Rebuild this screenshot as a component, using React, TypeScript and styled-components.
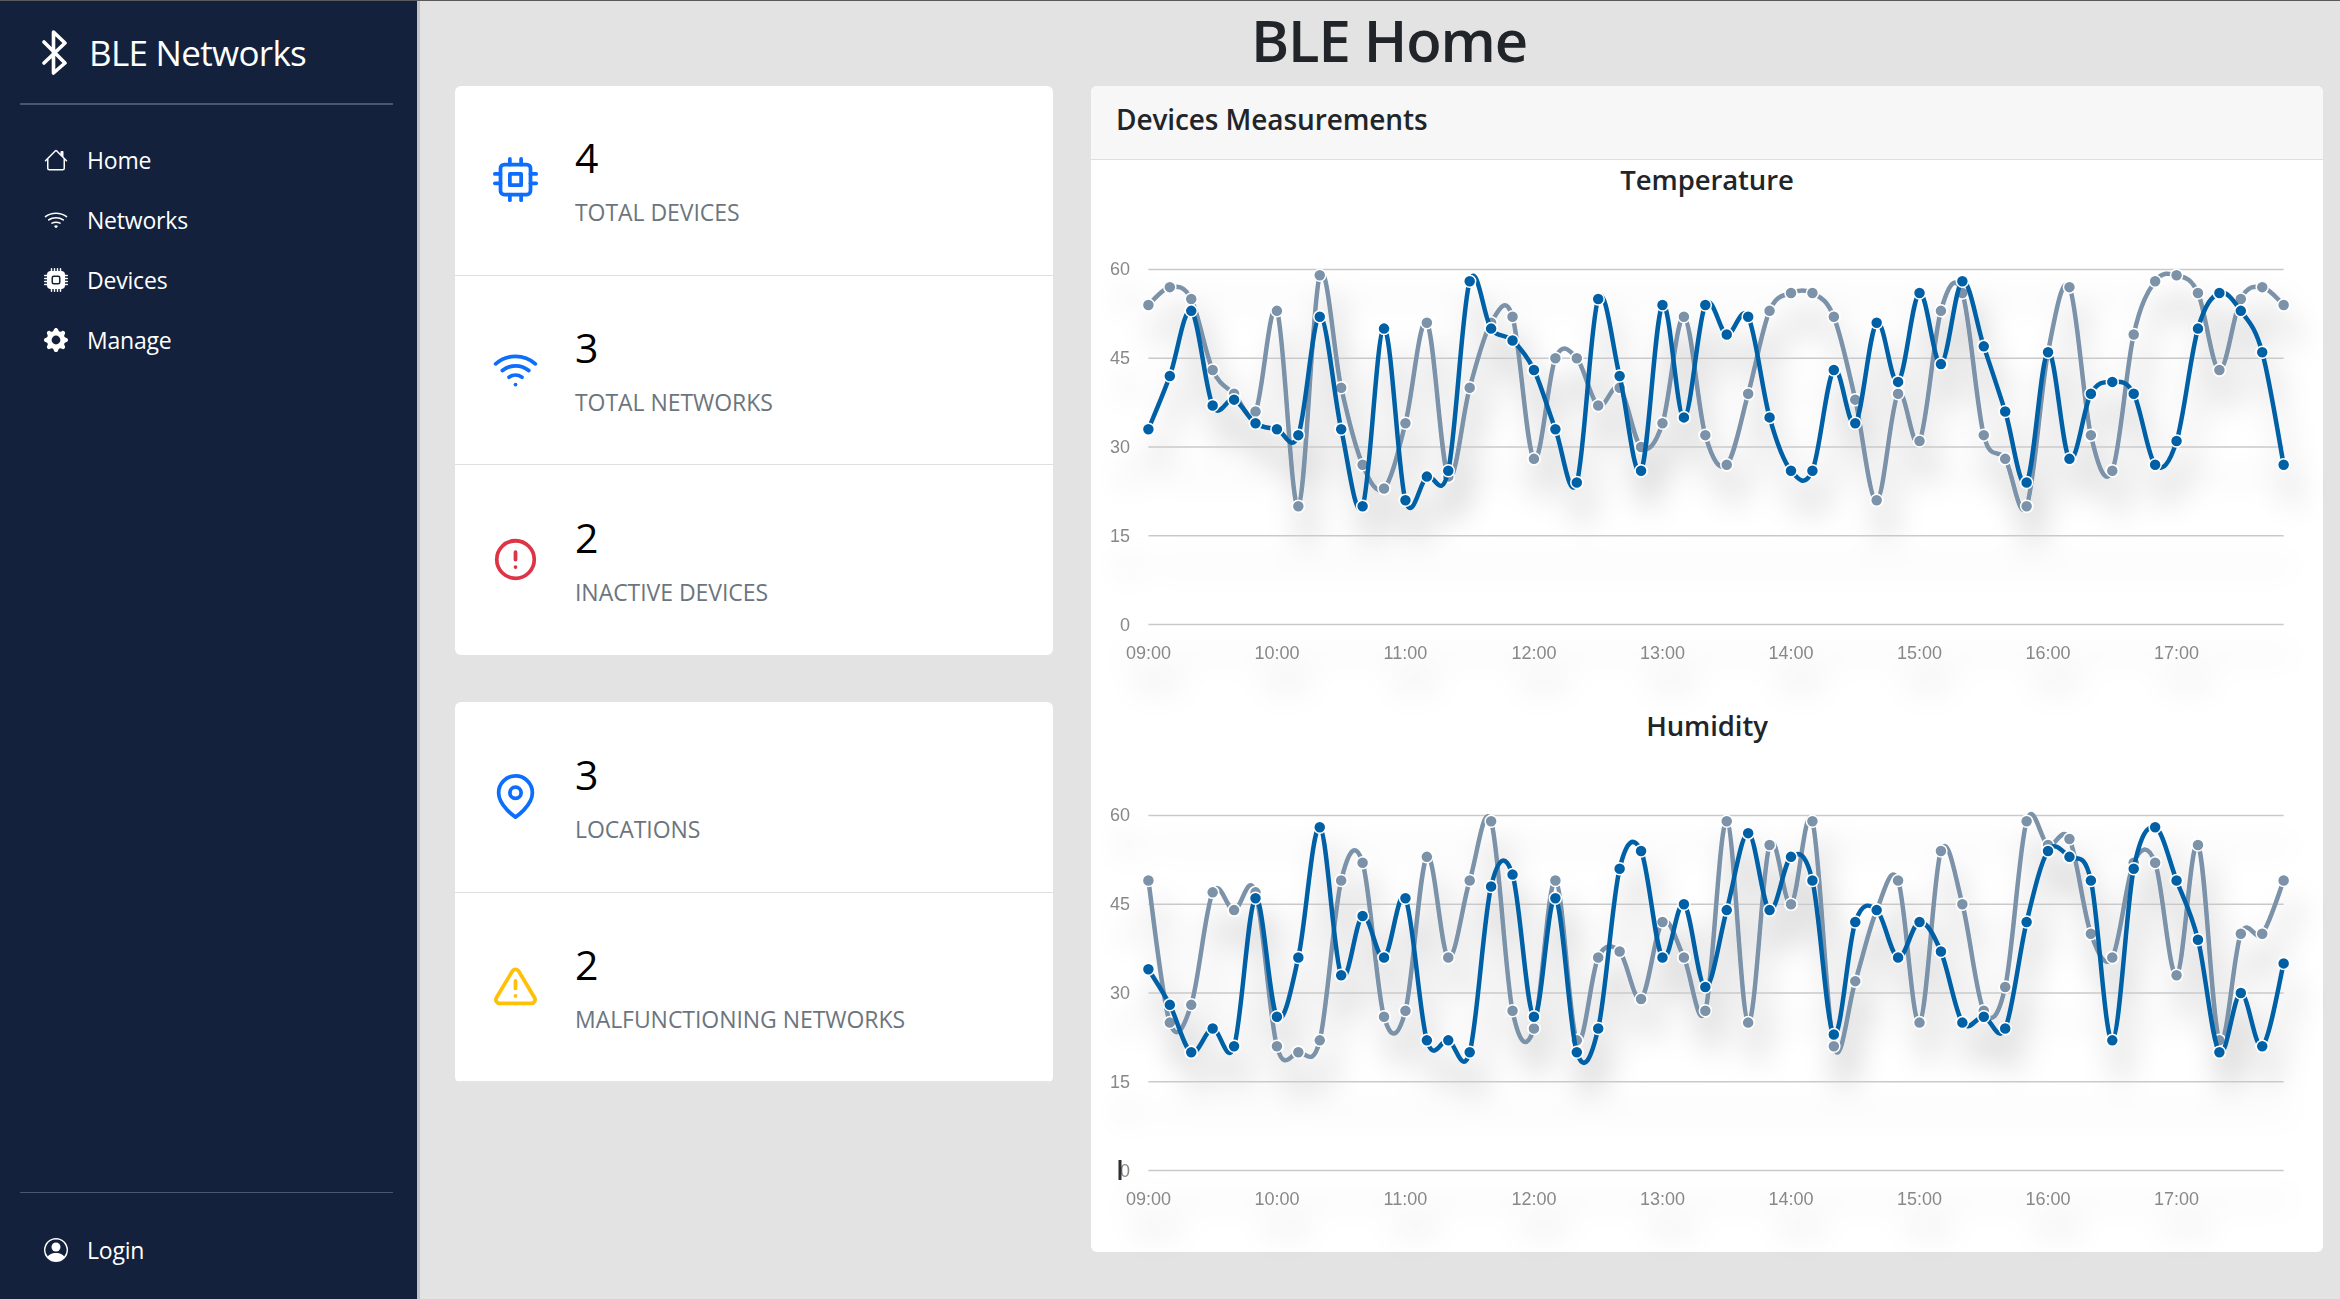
import React from "react";
import styled, { createGlobalStyle } from "styled-components";
import { BsHouse, BsWifi, BsCpuFill, BsGearFill, BsPersonCircle } from "react-icons/bs";
import { FiCpu, FiWifi, FiAlertCircle, FiMapPin, FiAlertTriangle } from "react-icons/fi";

const temperature = {
  blue: [33, 42, 53, 37, 38, 34, 33, 32, 52, 33, 20, 50, 21, 25, 26, 58, 50, 48, 43, 33, 24, 55, 42, 26, 54, 35, 54, 49, 52, 35, 26, 26, 43, 34, 51, 41, 56, 44, 58, 47, 36, 24, 46, 28, 39, 41, 39, 27, 31, 50, 56, 53, 46, 27],
  grey: [54, 57, 55, 43, 39, 36, 53, 20, 59, 40, 27, 23, 34, 51, 25, 40, 51, 52, 28, 45, 45, 37, 40, 30, 34, 52, 32, 27, 39, 53, 56, 56, 52, 38, 21, 39, 31, 53, 56, 32, 28, 20, 46, 57, 32, 26, 49, 58, 59, 56, 43, 55, 57, 54],
};

const humidity = {
  blue: [34, 28, 20, 24, 21, 46, 26, 36, 58, 33, 43, 36, 46, 22, 22, 20, 48, 50, 26, 46, 20, 24, 51, 54, 36, 45, 31, 44, 57, 44, 53, 49, 23, 42, 44, 36, 42, 37, 25, 26, 24, 42, 54, 53, 49, 22, 51, 58, 49, 39, 20, 30, 21, 35],
  grey: [49, 25, 28, 47, 44, 47, 21, 20, 22, 49, 52, 26, 27, 53, 36, 49, 59, 27, 24, 49, 22, 36, 37, 29, 42, 36, 27, 59, 25, 55, 45, 59, 21, 32, 44, 49, 25, 54, 45, 27, 31, 59, 55, 56, 40, 36, 52, 52, 33, 55, 22, 40, 40, 49],
};

const CHART_W = 1232;
const CHART_H = 546;
const PLOT_LEFT = 57.4;
const STEP = 21.42;
const ZERO_Y = 464.6;
const UNIT = 5.92;
const BLUE = "#0560a6";
const GREY = "#7b92a8";
const ticks = [60, 45, 30, 15, 0];
const hours = ["09:00", "10:00", "11:00", "12:00", "13:00", "14:00", "15:00", "16:00", "17:00"];

const px = (i: number) => PLOT_LEFT + i * STEP;
const py = (v: number) => ZERO_Y - v * UNIT;

// catmull-rom style smoothing, overshoots a little at the peaks like the original
const smoothPath = (values: number[]) => {
  const pts = values.map((v, i) => [px(i), py(v)]);
  const k = 0.17;
  let d = `M${pts[0][0]} ${pts[0][1]}`;
  for (let i = 0; i < pts.length - 1; i++) {
    const p0 = pts[i - 1] || pts[i];
    const p1 = pts[i];
    const p2 = pts[i + 1];
    const p3 = pts[i + 2] || p2;
    const c1x = p1[0] + (p2[0] - p0[0]) * k;
    const c1y = p1[1] + (p2[1] - p0[1]) * k;
    const c2x = p2[0] - (p3[0] - p1[0]) * k;
    const c2y = p2[1] - (p3[1] - p1[1]) * k;
    d += ` C${c1x.toFixed(1)} ${c1y.toFixed(1)} ${c2x.toFixed(1)} ${c2y.toFixed(1)} ${p2[0].toFixed(1)} ${p2[1].toFixed(1)}`;
  }
  return d;
};

const GlobalStyle = createGlobalStyle`
  html, body {
    margin: 0;
    padding: 0;
    background: #e3e3e3;
  }
  body {
    font-family: "Open Sans", "Noto Sans", sans-serif;
    overflow: hidden;
  }
`;

const Page = styled.div`
  display: flex;
  width: 2340px;
  height: 1299px;
  box-sizing: border-box;
  border-top: 1px solid #5a5a5a;
  overflow: hidden;
`;

const Sidebar = styled.aside`
  width: 420px;
  flex: none;
  box-sizing: border-box;
  display: flex;
  flex-direction: column;
  background: #13213c;
  border-right: 3px solid #c4c4c4;
  padding: 0 24px 0 20px;
  color: #fff;
`;

const Brand = styled.div`
  display: flex;
  align-items: center;
  gap: 22px;
  height: 104px;
  padding: 0 0 0 22px;
  box-sizing: border-box;
  border-bottom: 2px solid #4b5770;
  font-size: 35px;
  letter-spacing: -0.7px;
`;

const NavList = styled.nav`
  display: flex;
  flex-direction: column;
  padding-top: 25px;
  flex: 1;
`;

const NavItem = styled.div`
  display: flex;
  align-items: center;
  gap: 19px;
  height: 60px;
  padding-left: 24px;
  font-size: 23px;
  letter-spacing: -0.2px;
  svg {
    width: 24px;
    height: 24px;
  }
`;

const SidebarFoot = styled.div`
  border-top: 1px solid #4b5770;
  padding: 27px 0 19px;
`;

const Main = styled.main`
  flex: 1;
  display: flex;
  flex-direction: column;
  min-width: 0;
`;

const Title = styled.h1`
  margin: 0;
  height: 85px;
  padding-left: 18px;
  line-height: 78px;
  text-align: center;
  font-size: 58px;
  font-weight: 600;
  letter-spacing: -1.1px;
  color: #212529;
`;

const Content = styled.div`
  display: flex;
  gap: 38px;
  padding: 0 17px 0 35px;
`;

const LeftColumn = styled.div`
  width: 598px;
  flex: none;
  display: flex;
  flex-direction: column;
  gap: 47px;
`;

const Card = styled.section`
  background: #fff;
  border-radius: 6px;
  overflow: hidden;
`;

const StatRow = styled.div<{ $flush?: boolean }>`
  display: flex;
  align-items: center;
  height: ${(p) => (p.$flush ? "190.5px" : "189.7px")};
  box-sizing: border-box;
  border-bottom: 1px solid #e0e0e0;
  &:last-child {
    border-bottom: ${(p) => (p.$flush ? "2px solid #e4e4e4" : "none")};
  }
`;

const StatIcon = styled.div<{ $color: string }>`
  width: 121px;
  flex: none;
  display: flex;
  justify-content: center;
  padding-bottom: 1px;
  color: ${(p) => p.$color};
  svg {
    width: 45px;
    height: 45px;
  }
`;

const StatBody = styled.div`
  display: flex;
  flex-direction: column;
  padding-top: 8px;
  margin-left: -1px;
`;

const StatValue = styled.div`
  font-size: 41px;
  line-height: 56px;
  font-weight: 500;
  color: #000;
`;

const StatLabel = styled.div`
  font-size: 23px;
  line-height: 54px;
  letter-spacing: -0.05px;
  color: #6c757d;
`;

const ChartCard = styled(Card)`
  flex: 1;
  min-width: 0;
  overflow: visible;
`;

const ChartHeader = styled.header`
  height: 74px;
  box-sizing: border-box;
  display: flex;
  align-items: center;
  padding: 0 25px 8px;
  background: #f7f7f7;
  border-bottom: 1px solid #dfdfdf;
  border-radius: 6px 6px 0 0;
  font-size: 28px;
  font-weight: 600;
  letter-spacing: -0.1px;
  color: #212529;
`;

const ChartSvg = styled.svg`
  display: block;
  overflow: visible;
`;

const ChartTitle = styled.text`
  font-family: "Open Sans", sans-serif;
  font-size: 27.5px;
  font-weight: 600;
  letter-spacing: -0.1px;
  fill: #212529;
  text-anchor: middle;
`;

const AxisText = styled.text<{ $anchor: string }>`
  font-family: "Liberation Sans", Arial, sans-serif;
  font-size: 18px;
  fill: #888;
  text-anchor: ${(p) => p.$anchor};
`;

const GridLine = styled.line`
  stroke: #c9c9c9;
  stroke-width: 1.5;
`;

const SeriesLine = styled.path<{ $color: string }>`
  fill: none;
  stroke: ${(p) => p.$color};
  stroke-width: 4.5;
`;

const Marker = styled.circle<{ $color: string }>`
  fill: ${(p) => p.$color};
  stroke: #fff;
  stroke-width: 1.5;
`;

const Cursor = styled.rect`
  fill: #2c2f33;
`;

const stats = [
  [
    { value: "4", label: "TOTAL DEVICES", color: "#0d6efd", icon: <FiCpu /> },
    { value: "3", label: "TOTAL NETWORKS", color: "#0d6efd", icon: <FiWifi /> },
    { value: "2", label: "INACTIVE DEVICES", color: "#dc3545", icon: <FiAlertCircle /> },
  ],
  [
    { value: "3", label: "LOCATIONS", color: "#0d6efd", icon: <FiMapPin /> },
    { value: "2", label: "MALFUNCTIONING NETWORKS", color: "#ffc107", icon: <FiAlertTriangle /> },
  ],
];

interface ChartProps {
  id: string;
  title: string;
  data: { blue: number[]; grey: number[] };
  showCursor?: boolean;
}

const BluetoothRune = () => (
  <svg width="25" height="45" viewBox="0 0 25 45" fill="none" stroke="#fff" strokeWidth="3.6" strokeLinecap="round" strokeLinejoin="round">
    <path d="M2 12 L23 33 L11.5 43 V2 L23 13 L2 33" />
  </svg>
);

const Series = ({ values, color }: { values: number[]; color: string }) => (
  <g>
    <SeriesLine d={smoothPath(values)} $color={color} />
    {values.map((v, i) => (
      <Marker key={i} cx={px(i)} cy={py(v)} r={6} $color={color} />
    ))}
  </g>
);

const LineChart = ({ id, title, data, showCursor }: ChartProps) => (
  <ChartSvg width={CHART_W} height={CHART_H} viewBox={`0 0 ${CHART_W} ${CHART_H}`}>
    <defs>
      <filter id={id} filterUnits="userSpaceOnUse" x={-20} y={40} width={CHART_W + 40} height={CHART_H}>
        <feDropShadow dx={9} dy={30} stdDeviation={15} floodColor="#000" floodOpacity={0.24} />
      </filter>
    </defs>
    <ChartTitle x={616} y={30}>
      {title}
    </ChartTitle>
    <g filter={`url(#${id})`}>
      {ticks.map((t) => (
        <GridLine key={t} x1={PLOT_LEFT} x2={px(53)} y1={py(t)} y2={py(t)} />
      ))}
      {ticks.map((t) => (
        <AxisText key={t} $anchor="end" x={39} y={py(t) + 6}>
          {t}
        </AxisText>
      ))}
      {hours.map((h, i) => (
        <AxisText key={h} $anchor="middle" x={px(i * 6)} y={499}>
          {h}
        </AxisText>
      ))}
      <Series values={data.grey} color={GREY} />
      <Series values={data.blue} color={BLUE} />
    </g>
    {showCursor && <Cursor x={27.5} y={454} width={3} height={20} />}
  </ChartSvg>
);

const App = () => (
  <Page>
    <GlobalStyle />
    <Sidebar>
      <Brand>
        <BluetoothRune />
        <span>BLE Networks</span>
      </Brand>
      <NavList>
        <NavItem>
          <BsHouse />
          Home
        </NavItem>
        <NavItem>
          <BsWifi />
          Networks
        </NavItem>
        <NavItem>
          <BsCpuFill />
          Devices
        </NavItem>
        <NavItem>
          <BsGearFill />
          Manage
        </NavItem>
      </NavList>
      <SidebarFoot>
        <NavItem>
          <BsPersonCircle />
          Login
        </NavItem>
      </SidebarFoot>
    </Sidebar>
    <Main>
      <Title>BLE Home</Title>
      <Content>
        <LeftColumn>
          {stats.map((group, g) => (
            <Card key={g}>
              {group.map((s) => (
                <StatRow key={s.label} $flush={g === 1}>
                  <StatIcon $color={s.color}>{s.icon}</StatIcon>
                  <StatBody>
                    <StatValue>{s.value}</StatValue>
                    <StatLabel>{s.label}</StatLabel>
                  </StatBody>
                </StatRow>
              ))}
            </Card>
          ))}
        </LeftColumn>
        <ChartCard>
          <ChartHeader>Devices Measurements</ChartHeader>
          <LineChart id="temp-shadow" title="Temperature" data={temperature} />
          <LineChart id="hum-shadow" title="Humidity" data={humidity} showCursor />
        </ChartCard>
      </Content>
    </Main>
  </Page>
);

export default App;
